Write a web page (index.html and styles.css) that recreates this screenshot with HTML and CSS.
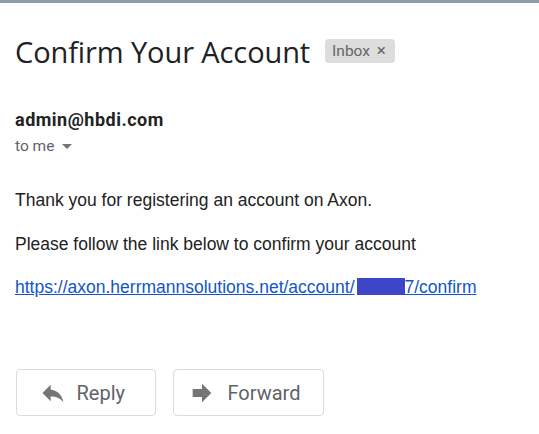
FILE: index.html
```html
<!DOCTYPE html>
<html>
<head>
<meta charset="utf-8">
<link rel="stylesheet" href="styles.css">
</head>
<body>
<div class="topbar"></div>
<main class="mail">
  <header class="subject-row">
    <h1 class="subject">Confirm Your Account</h1>
    <span class="label">Inbox <span class="x">×</span></span>
  </header>
  <section class="sender">
    <div class="from">admin@hbdi.com</div>
    <div class="to">to me <svg class="caret" width="10" height="5" viewBox="0 0 10 5"><path d="M0 0h10L5 5z" fill="#757575"/></svg></div>
  </section>
  <section class="body">
    <p>Thank you for registering an account on Axon.</p>
    <p>Please follow the link below to confirm your account</p>
    <p class="last"><a class="link" href="#">https://axon.herrmannsolutions.net/account/<span class="redact"></span>7/confirm</a></p>
  </section>
  <div class="actions">
    <button class="btn reply"><svg width="28" height="28" viewBox="0 0 24 24"><path d="M10 9V5l-7 7 7 7v-4.1c5 0 8.5 1.6 11 5.1-1-5-4-10-11-11z" fill="#757575"/></svg><span>Reply</span></button>
    <button class="btn fwd"><svg width="28" height="28" viewBox="0 0 24 24"><path d="M4 8.5h8V4l8 8-8 8v-4.5H4z" fill="#757575"/></svg><span>Forward</span></button>
  </div>
</main>
</body>
</html>
```
FILE: styles.css
```css
html, body { margin: 0; padding: 0; background: #fff; }
body { width: 539px; height: 434px; overflow: hidden; }
.topbar { height: 3px; background: #8d9ea9; }
.mail { padding: 0 15px; }
.subject-row { display: flex; align-items: center; margin-top: 30px; height: 36px; }
.subject { margin: 0; font-family: "Open Sans", sans-serif; font-weight: 400; font-size: 29px; color: #202124; letter-spacing: -0.1px; }
.label { margin-left: 15px; background: #dddddd; color: #666; border-radius: 4px; font-family: Roboto, sans-serif; font-size: 15.5px; padding: 2px 9px 2px 7px; line-height: 19px; }
.label .x { margin-left: 3px; font-size: 17px; }
.sender { margin-top: 39px; font-family: Roboto, sans-serif; }
.from { font-weight: 700; font-size: 18px; letter-spacing: 0.5px; color: #222; line-height: 24px; }
.to { margin-top: 4px; font-size: 15.5px; color: #5f6368; line-height: 20px; display: flex; align-items: center; }
.caret { margin-left: 8px; }
.body { margin-top: 33px; font-family: "Liberation Sans", Arial, sans-serif; font-size: 17.5px; color: #222; }
.body p { margin: 0 0 21.5px 0; line-height: 22px; }
.body p.last { margin-bottom: 0; }
.link { color: #1155cc; text-decoration: underline; }
.redact { display: inline-block; width: 48px; height: 17px; background: #3d46c9; vertical-align: -2px; margin-left: 2px; }
.actions { display: flex; gap: 17px; margin-top: 71px; padding-left: 1px; }
.btn { display: flex; align-items: center; height: 47px; border: 1px solid #dadce0; border-radius: 4px; background: #fff; font-family: Roboto, sans-serif; font-size: 20px; color: #5f6368; }
.btn.reply { padding: 0 30px 0 21.5px; }
.btn.reply svg { margin-right: 10px; }
.btn.fwd { padding: 0 23px 0 13.5px; }
.btn.fwd svg { margin-right: 12px; }
```
